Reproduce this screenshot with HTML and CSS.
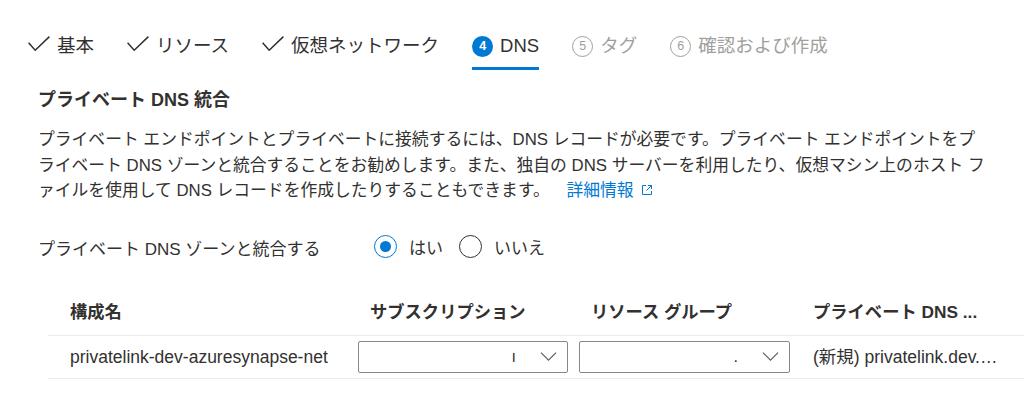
FILE: index.html
```html
<!DOCTYPE html>
<html lang="ja">
<head>
<meta charset="utf-8">
<title>DNS</title>
<link rel="stylesheet" href="styles.css">
</head>
<body>
<nav class="steps">
  <div class="step done">
    <svg class="check" viewBox="0 0 22 15"><path d="M0.6 6.8 L7.2 14.2 L21.4 0.6"/></svg>
    <span>基本</span>
  </div>
  <div class="step done">
    <svg class="check" viewBox="0 0 22 15"><path d="M0.6 6.8 L7.2 14.2 L21.4 0.6"/></svg>
    <span>リソース</span>
  </div>
  <div class="step done">
    <svg class="check" viewBox="0 0 22 15"><path d="M0.6 6.8 L7.2 14.2 L21.4 0.6"/></svg>
    <span>仮想ネットワーク</span>
  </div>
  <div class="step active">
    <span class="num">4</span>
    <span>DNS</span>
  </div>
  <div class="step todo">
    <span class="num">5</span>
    <span>タグ</span>
  </div>
  <div class="step todo">
    <span class="num">6</span>
    <span>確認および作成</span>
  </div>
</nav>

<main class="content">
  <h2 class="title">プライベート DNS 統合</h2>
  <p class="desc">プライベート エンドポイントとプライベートに接続するには、DNS レコードが必要です。プライベート エンドポイントをプ<br>ライベート DNS ゾーンと統合することをお勧めします。また、独自の DNS サーバーを利用したり、仮想マシン上のホスト フ<br>ァイルを使用して DNS レコードを作成したりすることもできます。 <a class="link" href="#">詳細情報<svg class="ext" viewBox="0 0 12 12"><path d="M5 1.5H1.5v9h9V7"/><path d="M7 1.5h3.5V5"/><path d="M10.5 1.5L5.5 6.5"/></svg></a></p>

  <div class="field">
    <span class="field-label">プライベート DNS ゾーンと統合する</span>
    <div class="radios">
      <label class="radio checked"><span class="ring"></span><span>はい</span></label>
      <label class="radio"><span class="ring"></span><span>いいえ</span></label>
    </div>
  </div>

  <div class="table">
    <div class="row head">
      <div class="cell">構成名</div>
      <div class="cell">サブスクリプション</div>
      <div class="cell">リソース グループ</div>
      <div class="cell">プライベート DNS ...</div>
    </div>
    <div class="row body">
      <div class="cell">privatelink-dev-azuresynapse-net</div>
      <div class="cell sel">
        <div class="dropdown"><span class="value">ı</span><svg class="chev" viewBox="0 0 18 10"><path d="M0.6 0.6 L9 9 L17.4 0.6"/></svg></div>
      </div>
      <div class="cell sel">
        <div class="dropdown"><span class="value">.</span><svg class="chev" viewBox="0 0 18 10"><path d="M0.6 0.6 L9 9 L17.4 0.6"/></svg></div>
      </div>
      <div class="cell">(新規) privatelink.dev.…</div>
    </div>
  </div>
</main>
</body>
</html>
```

FILE: styles.css
```css
* { box-sizing: border-box; }

html, body {
  margin: 0;
  padding: 0;
  background: #ffffff;
  overflow: hidden;
}

body {
  font-family: "Liberation Sans", "Noto Sans CJK JP", sans-serif;
  color: #323130;
}

/* ---------- wizard steps ---------- */
.steps {
  display: flex;
  gap: 33px;
  padding-left: 28px;
}

.step {
  display: flex;
  align-items: center;
  gap: 7px;
  padding: 34px 0 9px;
  border-bottom: 3px solid transparent;
  font-size: 18.5px;
  line-height: 24px;
  white-space: nowrap;
}

.step .check {
  width: 22px;
  height: 15px;
  margin-bottom: 6px;
  fill: none;
  stroke: #323130;
  stroke-width: 1.5;
}

.step .num {
  width: 21px;
  height: 21px;
  border-radius: 50%;
  display: flex;
  align-items: center;
  justify-content: center;
  font-size: 12.5px;
  line-height: 1;
}

.step.active {
  border-bottom-color: #0078d4;
}

.step.active .num {
  background: #0078d4;
  color: #ffffff;
  font-weight: 700;
}

.step.todo {
  color: #a19f9d;
}

.step.todo .num {
  border: 1px solid #a19f9d;
  color: #a19f9d;
}

/* ---------- content ---------- */
.content {
  padding-left: 38px;
}

.title {
  margin: 18px 0 0;
  font-size: 18px;
  line-height: 24px;
  font-weight: 700;
}

.desc {
  margin: 15px 0 0;
  width: 986px;
  font-size: 16.8px;
  line-height: 25.5px;
  white-space: nowrap;
}

.link {
  color: #0078d4;
  text-decoration: none;
  margin-left: 12px;
}

.ext {
  width: 12px;
  height: 12px;
  margin-left: 7px;
  fill: none;
  stroke: #0078d4;
  stroke-width: 1;
}

/* ---------- radio field ---------- */
.field {
  display: flex;
  align-items: center;
  margin-top: 28px;
  height: 30px;
  font-size: 17px;
}

.field-label {
  width: 336px;
  padding-top: 2px;
}

.radios {
  display: flex;
  gap: 16px;
}

.radio {
  display: flex;
  align-items: center;
  gap: 12px;
}

.ring {
  width: 23px;
  height: 23px;
  border-radius: 50%;
  border: 1.5px solid #323130;
  display: flex;
  align-items: center;
  justify-content: center;
}

.radio.checked .ring {
  border-color: #0078d4;
}

.radio.checked .ring::after {
  content: "";
  width: 11px;
  height: 11px;
  border-radius: 50%;
  background: #0078d4;
}

/* ---------- table ---------- */
.table {
  margin: 38px 0 0 10px;
}

.row {
  display: grid;
  grid-template-columns: 300px 221px 222px 1fr;
  align-items: center;
  border-bottom: 1px solid #edebe9;
}

.row.head {
  padding-bottom: 11px;
  font-size: 17.3px;
  line-height: 24px;
  font-weight: 700;
}

.row.body {
  height: 43px;
  font-size: 17.5px;
  line-height: 24px;
}

.cell {
  padding-left: 22px;
  white-space: nowrap;
  overflow: hidden;
}

.cell.sel {
  padding: 0 1px 0 10px;
}

.dropdown {
  height: 32px;
  border: 1px solid #8a8886;
  border-radius: 2px;
  display: flex;
  align-items: center;
  justify-content: flex-end;
  padding-right: 10px;
  font-size: 16px;
}

.dropdown .value {
  line-height: 1;
}

.chev {
  width: 17px;
  height: 9px;
  margin-left: 24px;
  fill: none;
  stroke: #605e5c;
  stroke-width: 1.3;
}
```
